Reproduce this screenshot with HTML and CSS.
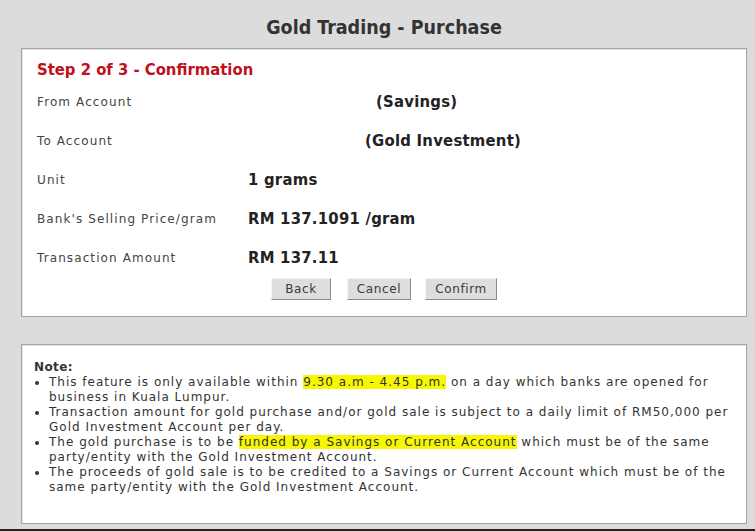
FILE: index.html
```html
<!DOCTYPE html>
<html lang="en">
<head>
    <meta charset="UTF-8">
    <title>Gold Trading - Purchase</title>
    <link rel="stylesheet" href="styles.css">
</head>
<body>
    <div id="app">
        <h1 class="title">Gold Trading - Purchase</h1>

        <div class="panel confirm">
            <h2 class="step">Step 2 of 3 - Confirmation</h2>

            <div class="rows">
                <div class="label">From Account</div>
                <div class="value"><span class="acc-from">(Savings)</span></div>

                <div class="label">To Account</div>
                <div class="value"><span class="acc-to">(Gold Investment)</span></div>

                <div class="label">Unit</div>
                <div class="value">1 grams</div>

                <div class="label">Bank's Selling Price/gram</div>
                <div class="value">RM 137.1091 /gram</div>

                <div class="label">Transaction Amount</div>
                <div class="value">RM 137.11</div>
            </div>

            <div class="buttons">
                <button class="btn btn-back">Back</button>
                <button class="btn btn-cancel">Cancel</button>
                <button class="btn btn-confirm">Confirm</button>
            </div>
        </div>

        <div class="panel note">
            <div class="note-title">Note:</div>
            <ul>
                <li>This feature is only available within <mark>9.30 a.m - 4.45 p.m.</mark> on a day which banks are opened for business in Kuala Lumpur.</li>
                <li>Transaction amount for gold purchase and/or gold sale is subject to a daily limit of RM50,000 per Gold Investment Account per day.</li>
                <li>The gold purchase is to be <mark>funded by a Savings or Current Account</mark> which must be of the same party/entity with the Gold Investment Account.</li>
                <li>The proceeds of gold sale is to be credited to a Savings or Current Account which must be of the same party/entity with the Gold Investment Account.</li>
            </ul>
        </div>
    </div>
    <div class="bottom-bar"></div>
</body>
</html>
```

FILE: styles.css
```css
html, body {
    margin: 0;
    height: 531px;
    overflow: hidden;
}
body {
    background: #dcdcdc;
    font-family: "DejaVu Sans", Verdana, sans-serif;
    color: #333;
    position: relative;
}
#app {
    display: flex;
    flex-direction: column;
    padding: 0 8px 0 21px;
}
.title {
    margin: 0;
    height: 48px;
    line-height: 55px;
    text-align: center;
    font-family: "DejaVu Sans Condensed", sans-serif;
    font-size: 19.5px;
    font-weight: bold;
    color: #333;
}
.panel {
    background: #fff;
    border: 1px solid #a4a4a4;
    box-shadow: inset 1px 1px 0 #e6e6e6;
}
.confirm {
    height: 267px;
    padding: 0 0 0 15px;
}
.step {
    margin: 11px 0 0;
    height: 20px;
    line-height: 20px;
    font-family: "DejaVu Sans Condensed", sans-serif;
    font-size: 16.5px;
    font-weight: bold;
    color: #c0101a;
}
.rows {
    display: grid;
    grid-template-columns: 211px 1fr;
    grid-auto-rows: 39px;
    margin-top: 2px;
}
.label {
    font-size: 12px;
    letter-spacing: 1.1px;
    line-height: 40px;
    color: #444;
}
.value {
    font-family: "DejaVu Sans Condensed", sans-serif;
    font-size: 16.5px;
    font-weight: bold;
    letter-spacing: 0.25px;
    line-height: 39px;
    color: #222;
}
.acc-from {
    margin-left: 128px;
}
.acc-to {
    margin-left: 117px;
}
.buttons {
    display: flex;
    justify-content: center;
    margin: 1px 0 0 -15px;
}
.btn {
    height: 22px;
    padding: 0;
    margin: 0 7px;
    font-family: "DejaVu Sans", sans-serif;
    font-size: 12px;
    letter-spacing: 0.6px;
    color: #3a3a3a;
    background: #dedede;
    border: 1px solid;
    border-color: #f4f4f4 #8a8a8a #8a8a8a #f4f4f4;
}
.btn-back { width: 60px; margin-right: 9px; }
.btn-cancel { width: 64px; }
.btn-confirm { width: 72px; }

.note {
    margin-top: 27px;
    height: 178px;
    padding: 0 0 0 12px;
    font-size: 12px;
    letter-spacing: 1px;
    line-height: 15px;
    color: #333;
}
.note-title {
    margin-top: 15px;
    font-weight: bold;
    letter-spacing: 0.4px;
}
.note ul {
    margin: 0;
    padding: 0 12px 0 15px;
}
.note mark {
    background: #f7f700;
    color: #333;
}
.bottom-bar {
    position: absolute;
    left: 0;
    right: 0;
    bottom: 0;
    height: 2px;
    background: #222;
}
```
